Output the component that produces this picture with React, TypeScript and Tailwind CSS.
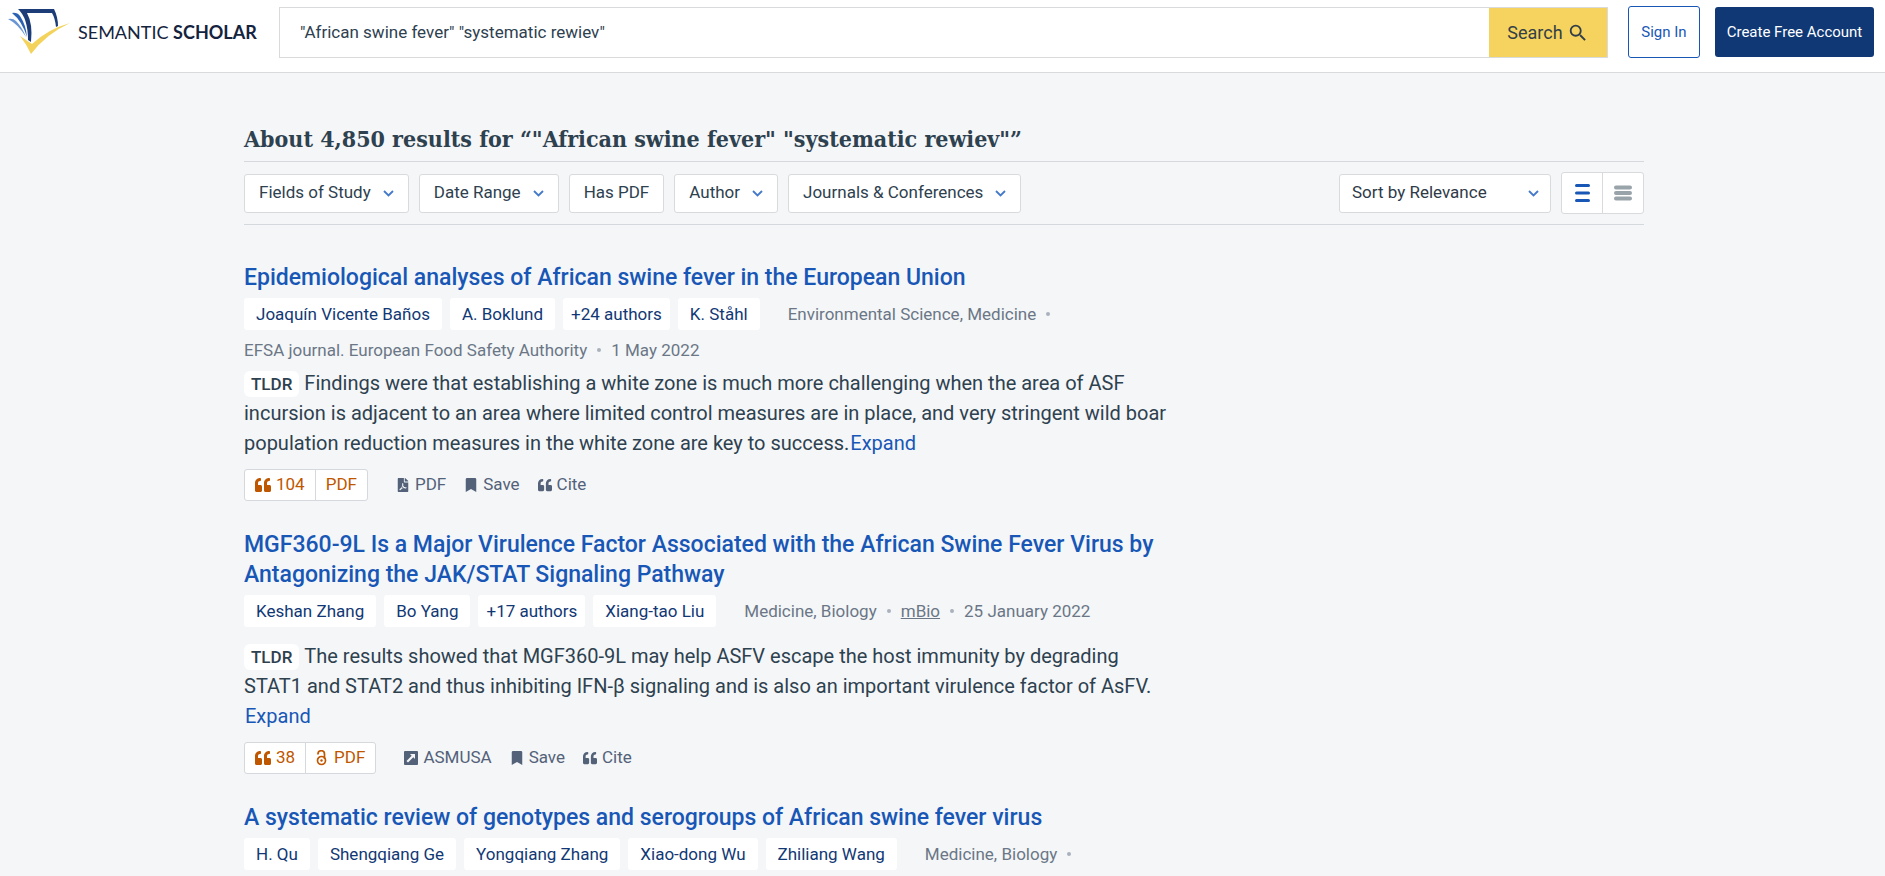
import type { ReactNode } from "react";
import { FaBookmark, FaFilePdf, FaQuoteLeft } from "react-icons/fa";
import { MdSearch } from "react-icons/md";

type Action = { label: string; kind: "pdf" | "link" };

type Paper = {
  title: string;
  authors: { name: string; more?: boolean }[];
  meta: { text: string; link?: boolean }[];
  trailingDot?: boolean;
  tldr?: string;
  citations?: number;
  openAccess?: boolean;
  action?: Action;
};

const papers: Paper[] = [
  {
    title: "Epidemiological analyses of African swine fever in the European Union",
    authors: [
      { name: "Joaquín Vicente Baños" },
      { name: "A. Boklund" },
      { name: "+24 authors", more: true },
      { name: "K. Ståhl" },
    ],
    meta: [
      { text: "Environmental Science, Medicine" },
      { text: "EFSA journal. European Food Safety Authority" },
      { text: "1 May 2022" },
    ],
    tldr: "Findings were that establishing a white zone is much more challenging when the area of ASF incursion is adjacent to an area where limited control measures are in place, and very stringent wild boar population reduction measures in the white zone are key to success.",
    citations: 104,
    action: { label: "PDF", kind: "pdf" },
  },
  {
    title:
      "MGF360-9L Is a Major Virulence Factor Associated with the African Swine Fever Virus by Antagonizing the JAK/STAT Signaling Pathway",
    authors: [
      { name: "Keshan Zhang" },
      { name: "Bo Yang" },
      { name: "+17 authors", more: true },
      { name: "Xiang-tao Liu" },
    ],
    meta: [
      { text: "Medicine, Biology" },
      { text: "mBio", link: true },
      { text: "25 January 2022" },
    ],
    tldr: "The results showed that MGF360-9L may help ASFV escape the host immunity by degrading STAT1 and STAT2 and thus inhibiting IFN-β signaling and is also an important virulence factor of AsFV.",
    citations: 38,
    openAccess: true,
    action: { label: "ASMUSA", kind: "link" },
  },
  {
    title: "A systematic review of genotypes and serogroups of African swine fever virus",
    authors: [
      { name: "H. Qu" },
      { name: "Shengqiang Ge" },
      { name: "Yongqiang Zhang" },
      { name: "Xiao-dong Wu" },
      { name: "Zhiliang Wang" },
    ],
    meta: [{ text: "Medicine, Biology" }],
    trailingDot: true,
  },
];

const filters = [
  { label: "Fields of Study", menu: true },
  { label: "Date Range", menu: true },
  { label: "Has PDF", menu: false },
  { label: "Author", menu: true },
  { label: "Journals & Conferences", menu: true },
];

const Logo = () => (
  <svg width="62" height="46" viewBox="0 0 62 46" aria-hidden="true">
    <path d="M0 10Q5 9 8 12Q14 18 18 28Q10 15 0 10Z" fill="#6a96d4" />
    <path d="M4 4Q9 3 12 7Q18 16 19 28Q14 12 4 4Z" fill="#2d62b3" />
    <path d="M10 0H46Q50 8 50 17L48 18Q47 9 44 4H19Q25 15 23 33L20 31Q20 9 10 0Z" fill="#1c3d78" />
    <path d="M12 27L24 35Q40 20 62 14Q38 25 23 45Q19 36 12 27Z" fill="#f3d35c" />
  </svg>
);

const Chevron = () => (
  <svg width="11" height="7" viewBox="0 0 11 7" fill="none" aria-hidden="true">
    <path d="M1 1L5.5 5.5L10 1" stroke="#4579cb" strokeWidth="1.8" />
  </svg>
);

const LinkOutIcon = () => (
  <svg width="14" height="14" viewBox="0 0 14 14" aria-hidden="true">
    <rect width="14" height="14" rx="1" fill="currentColor" />
    <path d="M6 3H11V8L9.300 6.300L4 11.500L2.500 10L7.700 4.700Z" fill="#f5f6f8" />
  </svg>
);

const OpenAccessIcon = () => (
  <svg width="11" height="16" viewBox="0 0 11 16" fill="none" stroke="currentColor" strokeWidth="1.7" aria-hidden="true">
    <path d="M2 4.500V4A3 3 0 0 1 8.500 4V9" />
    <circle cx="5.500" cy="10.500" r="4" />
    <circle cx="5.500" cy="10.500" r="1.200" fill="currentColor" stroke="none" />
  </svg>
);

const Dot = () => <span className="mx-[10px] size-1 rounded-full bg-[#a9b1bc]" />;

const ActionButton = ({ icon, children }: { icon: ReactNode; children: ReactNode }) => (
  <button className="flex items-center gap-[5px] text-[17px] text-[#536179]">
    {icon}
    {children}
  </button>
);

const Header = () => (
  <header className="flex h-[73px] items-start border-b border-[#d9dadc] bg-white pr-[11px] pl-2">
    <a href="#" aria-label="Semantic Scholar" className="mt-[9px] flex w-[271px] shrink-0 items-start">
      <Logo />
      <span className="mt-[11px] ml-2 font-[Lato,sans-serif] text-lg leading-6 whitespace-nowrap text-[#14243e]">
        SEMANTIC <b className="font-bold">SCHOLAR</b>
      </span>
    </a>
    <form className="mt-[7px] flex h-[51px] flex-1 border border-[#d9dadc]">
      <input
        type="text"
        aria-label="Search papers"
        defaultValue={'"African swine fever" "systematic rewiev"'}
        className="min-w-0 flex-1 bg-white px-5 text-[17px] text-[#2e414f] outline-none"
      />
      <button type="button" className="flex w-[118px] items-center justify-center gap-1 bg-[#f5d35e] text-lg text-[#333f48]">
        Search
        <MdSearch size={22} />
      </button>
    </form>
    <button className="mt-[6px] ml-5 h-[52px] w-[72px] rounded-[3px] border border-[#1857b6] text-[15px] text-[#1857b6]">
      Sign In
    </button>
    <button className="mt-[7px] ml-[15px] h-[50px] w-[159px] rounded-[3px] bg-[#0f3875] text-[15px] text-white">
      Create Free Account
    </button>
  </header>
);

const FilterBar = () => (
  <div className="flex h-[64px] items-center justify-between border-y border-[#d5d9dd]">
    <div className="flex gap-[10px]">
      {filters.map((filter) => (
        <button
          key={filter.label}
          className="flex h-[39px] items-center gap-3 rounded-[3px] border border-[#d9dadc] bg-white px-[14px] text-[17px] text-[#2e414f]"
        >
          {filter.label}
          {filter.menu && <Chevron />}
        </button>
      ))}
    </div>
    <div className="flex items-center gap-[10px]">
      <div className="relative">
        <select
          aria-label="Sort results"
          className="h-[39px] w-[212px] appearance-none rounded-[3px] border border-[#d9dadc] bg-white px-3 text-[17px] text-[#2e3a47]"
        >
          <option>Sort by Relevance</option>
        </select>
        <span className="pointer-events-none absolute top-4 right-3">
          <Chevron />
        </span>
      </div>
      <div className="flex h-[42px] w-[83px] rounded-[3px] border border-[#d9dadc] bg-white">
        <button aria-label="Detailed view" className="flex flex-1 items-center justify-center border-r border-[#d9dadc]">
          <svg width="15" height="18" viewBox="0 0 15 18" stroke="#1857b6" strokeWidth="3" strokeLinecap="round">
            <path d="M1.500 1.500H13.500M1.500 9H13.500M1.500 16.500H13.500" />
          </svg>
        </button>
        <button aria-label="Compact view" className="flex flex-1 items-center justify-center">
          <svg width="18" height="16" viewBox="0 0 18 16" stroke="#98a3aa" strokeWidth="4" strokeLinecap="round">
            <path d="M2 2.500H16M2 8H16M2 13.500H16" />
          </svg>
        </button>
      </div>
    </div>
  </div>
);

const PaperResult = ({ paper }: { paper: Paper }) => (
  <article className="max-w-[930px]">
    <h2 className="text-[23px] leading-[30px] font-medium">
      <a href="#" className="text-[#1857b6]">{paper.title}</a>
    </h2>
    <div className="mt-[3px] flex flex-wrap items-center text-[17px] leading-9 text-[#6b7686]">
      <span className="mr-7 flex gap-2">
        {paper.authors.map((author) => (
          <a
            key={author.name}
            href="#"
            className={`my-[2px] rounded-[3px] bg-white leading-8 text-[#113875] ${author.more ? "px-2" : "px-3"}`}
          >
            {author.name}
          </a>
        ))}
      </span>
      {paper.meta.map((item, index) => (
        <span key={item.text} className="flex items-center">
          {item.link ? <a href="#" className="underline">{item.text}</a> : item.text}
          {(index < paper.meta.length - 1 || paper.trailingDot) && <Dot />}
        </span>
      ))}
    </div>
    {paper.tldr && (
      <p className={`text-xl leading-[30px] text-[#2e414f] ${paper.openAccess ? "mt-3" : ""}`}>
        <span className="mr-[5px] inline-block rounded-md bg-white px-[7px] text-[17px] leading-[26px] font-medium">TLDR</span>
        {paper.tldr}
        <wbr />
        <button className="px-px text-[#1857b6]">Expand</button>
      </p>
    )}
    {paper.action && (
      <div className="mt-[11px] flex items-center">
        <div className="mr-7 flex h-8 rounded-[3px] border border-[#d5d9dd] bg-white text-[17px] text-[#bf5700]">
          <a href="#" className="flex items-center gap-[5px] border-r border-[#d5d9dd] px-[10px]">
            <FaQuoteLeft size={16} />
            {paper.citations}
          </a>
          <a href="#" className="flex items-center gap-[7px] px-[10px]">
            {paper.openAccess && <OpenAccessIcon />}
            PDF
          </a>
        </div>
        <div className="flex gap-[18px]">
          <ActionButton icon={paper.action.kind === "pdf" ? <FaFilePdf size={14} /> : <LinkOutIcon />}>
            {paper.action.label}
          </ActionButton>
          <ActionButton icon={<FaBookmark size={14} />}>Save</ActionButton>
          <ActionButton icon={<FaQuoteLeft size={14} />}>Cite</ActionButton>
        </div>
      </div>
    )}
  </article>
);

const App = () => (
  <div className="min-h-screen bg-[#f4f6f8] font-[Roboto,sans-serif]">
    <Header />
    <main className="pl-[3px]">
      <div className="mx-auto max-w-[1400px]">
        <h1 className="pt-12 pb-1 font-['Roboto_Slab','DejaVu_Serif_Condensed','DejaVu_Serif',serif] text-[23px] leading-9 font-bold text-[#2e414f]">
          About 4,850 results for “"African swine fever" "systematic rewiev"”
        </h1>
        <FilterBar />
        <div className="mt-[38px] flex flex-col gap-[29px]">
          {papers.map((paper) => (
            <PaperResult key={paper.title} paper={paper} />
          ))}
        </div>
      </div>
    </main>
  </div>
);

export default App;
